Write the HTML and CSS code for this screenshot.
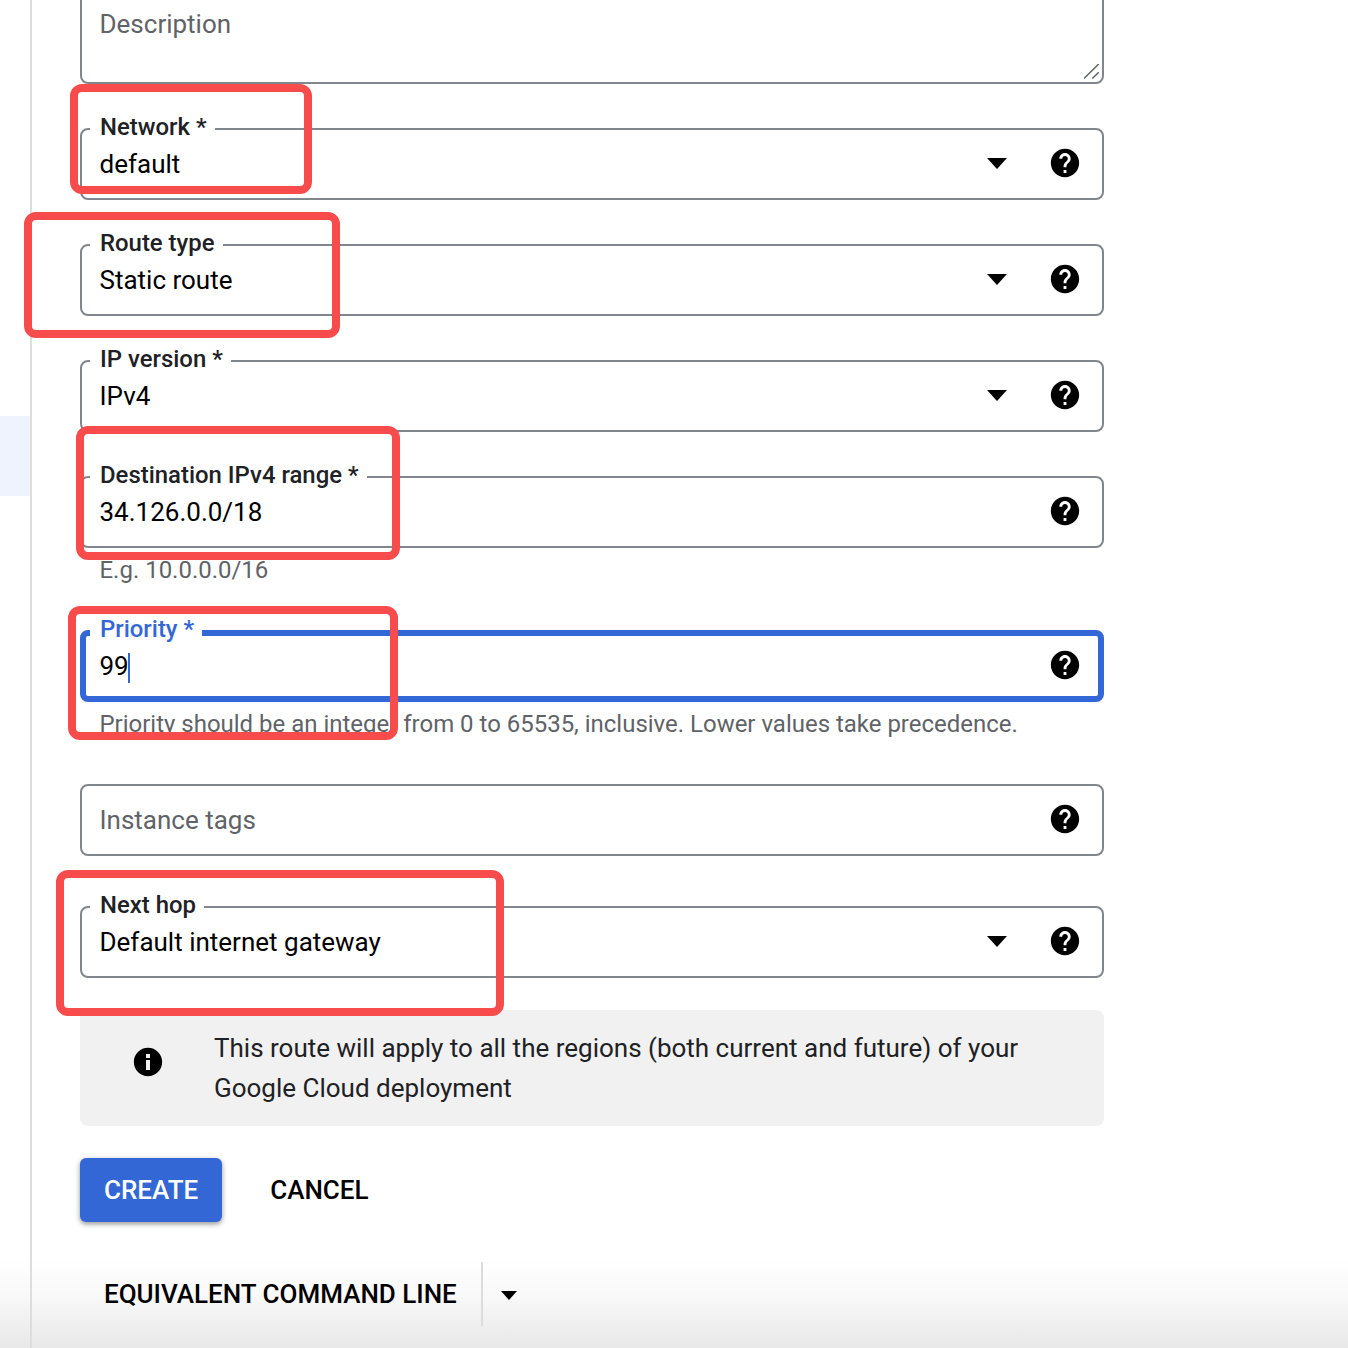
FILE: index.html
```html
<!DOCTYPE html>
<html lang="en">
<head>
<meta charset="utf-8">
<title>Create route</title>
<link rel="stylesheet" href="styles.css">
</head>
<body>
<svg class="defs" width="0" height="0" aria-hidden="true">
  <symbol id="help" viewBox="0 0 24 24"><path d="M12 2C6.48 2 2 6.48 2 12s4.48 10 10 10 10-4.48 10-10S17.52 2 12 2zm1 17h-2v-2h2v2zm2.07-7.75l-.9.92C13.45 12.9 13 13.5 13 15h-2v-.5c0-1.1.45-2.1 1.17-2.83l1.24-1.26c.37-.36.59-.86.59-1.41 0-1.1-.9-2-2-2s-2 .9-2 2H8c0-2.21 1.79-4 4-4s4 1.79 4 4c0 .88-.36 1.68-.93 2.25z"/></symbol>
  <symbol id="info" viewBox="0 0 24 24"><path d="M12 2C6.48 2 2 6.48 2 12s4.48 10 10 10 10-4.48 10-10S17.52 2 12 2zm1.4 15.6h-2.8v-7h2.8v7zm0-8.4h-2.8V6.4h2.8v2.8z"/></symbol>
</svg>
<div class="fade"></div>
<div class="page">
  <aside class="rail"><div class="rail-active"></div></aside>
  <main class="form">
    <div class="field area">
      <span class="placeholder">Description</span>
      <svg class="grip" viewBox="0 0 16 16"><path d="M0 14.5 14.7 0M8.3 14.5l6.4-6.2"/></svg>
    </div>

    <div class="field gap44">
      <label class="label">Network *</label><span class="value">default</span>
      <i class="caret"></i><svg class="help"><use href="#help"/></svg>
    </div>
    <div class="field gap44">
      <label class="label">Route type</label><span class="value">Static route</span>
      <i class="caret"></i><svg class="help"><use href="#help"/></svg>
    </div>
    <div class="field gap44">
      <label class="label">IP version *</label><span class="value">IPv4</span>
      <i class="caret"></i><svg class="help"><use href="#help"/></svg>
    </div>
    <div class="field gap44">
      <label class="label">Destination IPv4 range *</label><span class="value">34.126.0.0/18</span>
      <svg class="help"><use href="#help"/></svg>
    </div>
    <p class="hint">E.g. 10.0.0.0/16</p>

    <div class="field focused">
      <label class="label">Priority *</label><span class="value">99<i class="cursor"></i></span>
      <svg class="help"><use href="#help"/></svg>
    </div>
    <p class="hint">Priority should be an integer from 0 to 65535, inclusive. Lower values take precedence.</p>

    <div class="field">
      <span class="placeholder">Instance tags</span>
      <svg class="help"><use href="#help"/></svg>
    </div>
    <div class="field gap50">
      <label class="label">Next hop</label><span class="value">Default internet gateway</span>
      <i class="caret"></i><svg class="help"><use href="#help"/></svg>
    </div>

    <div class="notice">
      <svg class="info-icon"><use href="#info"/></svg>
      <p>This route will apply to all the regions (both current and future) of your Google Cloud deployment</p>
    </div>

    <div class="actions">
      <button class="btn primary">CREATE</button>
      <button class="btn plain">CANCEL</button>
    </div>

    <div class="command">
      <button class="btn plain">EQUIVALENT COMMAND LINE</button>
      <span class="divider"></span>
      <i class="caret small"></i>
    </div>
  </main>
</div>
<div class="mark mark-network"></div>
<div class="mark mark-route"></div>
<div class="mark mark-dest"></div>
<div class="mark mark-priority"></div>
<div class="mark mark-hop"></div>
</body>
</html>
```
FILE: styles.css
```css
* { box-sizing: border-box; }
html, body { margin: 0; height: 1348px; overflow: hidden; background: #fff; }
body { position: relative; font-family: Roboto, "Liberation Sans", sans-serif; color: #000; }
.defs { position: absolute; }
.page { position: relative; display: flex; align-items: flex-start; height: 1348px; }
.rail { flex: none; width: 32px; height: 1348px; border-right: 2px solid #dddddd; padding-top: 416px; }
.rail-active { height: 80px; background: #eef3fd; }
.form { flex: none; width: 1024px; margin: -36px 0 0 48px; }

.field { position: relative; display: flex; align-items: center; height: 72px; padding: 0 20px 0 17.5px; border: 2px solid #80868b; border-radius: 8px; background: #fff; }
.gap44 { margin-top: 44px; }
.gap50 { margin-top: 50px; }
.area { height: 120px; align-items: flex-start; padding-top: 40px; }
.label { position: absolute; top: -19px; left: 8px; padding: 0 8px 0 10px; background: #fff; font-size: 23.92px; line-height: 32px; font-weight: 500; color: #202124; }
.value { flex: 1; font-size: 26px; line-height: 36px; }
.placeholder { flex: 1; font-size: 26px; line-height: 36px; color: #5f6368; }
.caret { flex: none; width: 0; height: 0; margin: 0 41px 2px 0; border-style: solid; border-width: 11px 10px 0; border-color: #000 transparent transparent; }
.help { flex: none; width: 34px; height: 34px; margin-bottom: 2px; }
.grip { position: absolute; right: 2px; bottom: 2px; width: 16px; height: 16px; fill: none; stroke: #5f6368; stroke-width: 1.5; }

.hint { margin: 0 0 38px; padding-left: 19.5px; font-size: 23.97px; line-height: 44px; color: #5f6368; }

.focused { padding: 0 16px 0 13.5px; border: 6px solid #3367d6; }
.focused .label { top: -23px; left: 4px; color: #3367d6; }
.cursor { display: inline-block; width: 2px; height: 30px; margin-left: -1px; vertical-align: middle; background: #3367d6; }

.notice { display: flex; align-items: center; margin-top: 32px; height: 116px; padding-left: 51px; border-radius: 8px; background: #f1f1f1; }
.info-icon { flex: none; width: 34px; height: 34px; margin-bottom: 12px; }
.notice p { margin: 0 0 0 49px; width: 840px; font-size: 26px; line-height: 40px; color: #202124; }

.actions { display: flex; align-items: center; margin-top: 32px; height: 64px; }
.btn { height: 64px; padding: 0 24px; border: 0; border-radius: 6px; background: none; font: 500 26px/64px Roboto, "Liberation Sans", sans-serif; color: #000; }
.primary { background: #3367d6; color: #fff; box-shadow: 0 2px 4px rgba(60, 64, 67, .4), 0 2px 6px rgba(60, 64, 67, .2); }
.actions .plain { margin-left: 24px; }
.command { display: flex; align-items: center; margin-top: 40px; height: 64px; }
.divider { width: 2px; height: 64px; background: #dadce0; }
.caret.small { margin: 2px 0 0 18px; border-width: 9px 8px 0; }

.fade { position: absolute; left: 0; right: 0; bottom: 0; height: 90px; background: linear-gradient(#fff, #f9f9f9 40%, #e8e8e8); }
.mark { position: absolute; border: 8px solid #f84c4c; border-radius: 12px; }
.mark-network { left: 70px; top: 84px; width: 242px; height: 110px; }
.mark-route { left: 24px; top: 212px; width: 316px; height: 126px; }
.mark-dest { left: 76px; top: 426px; width: 324px; height: 134px; }
.mark-priority { left: 68px; top: 606px; width: 330px; height: 134px; }
.mark-hop { left: 56px; top: 870px; width: 448px; height: 146px; }
```
